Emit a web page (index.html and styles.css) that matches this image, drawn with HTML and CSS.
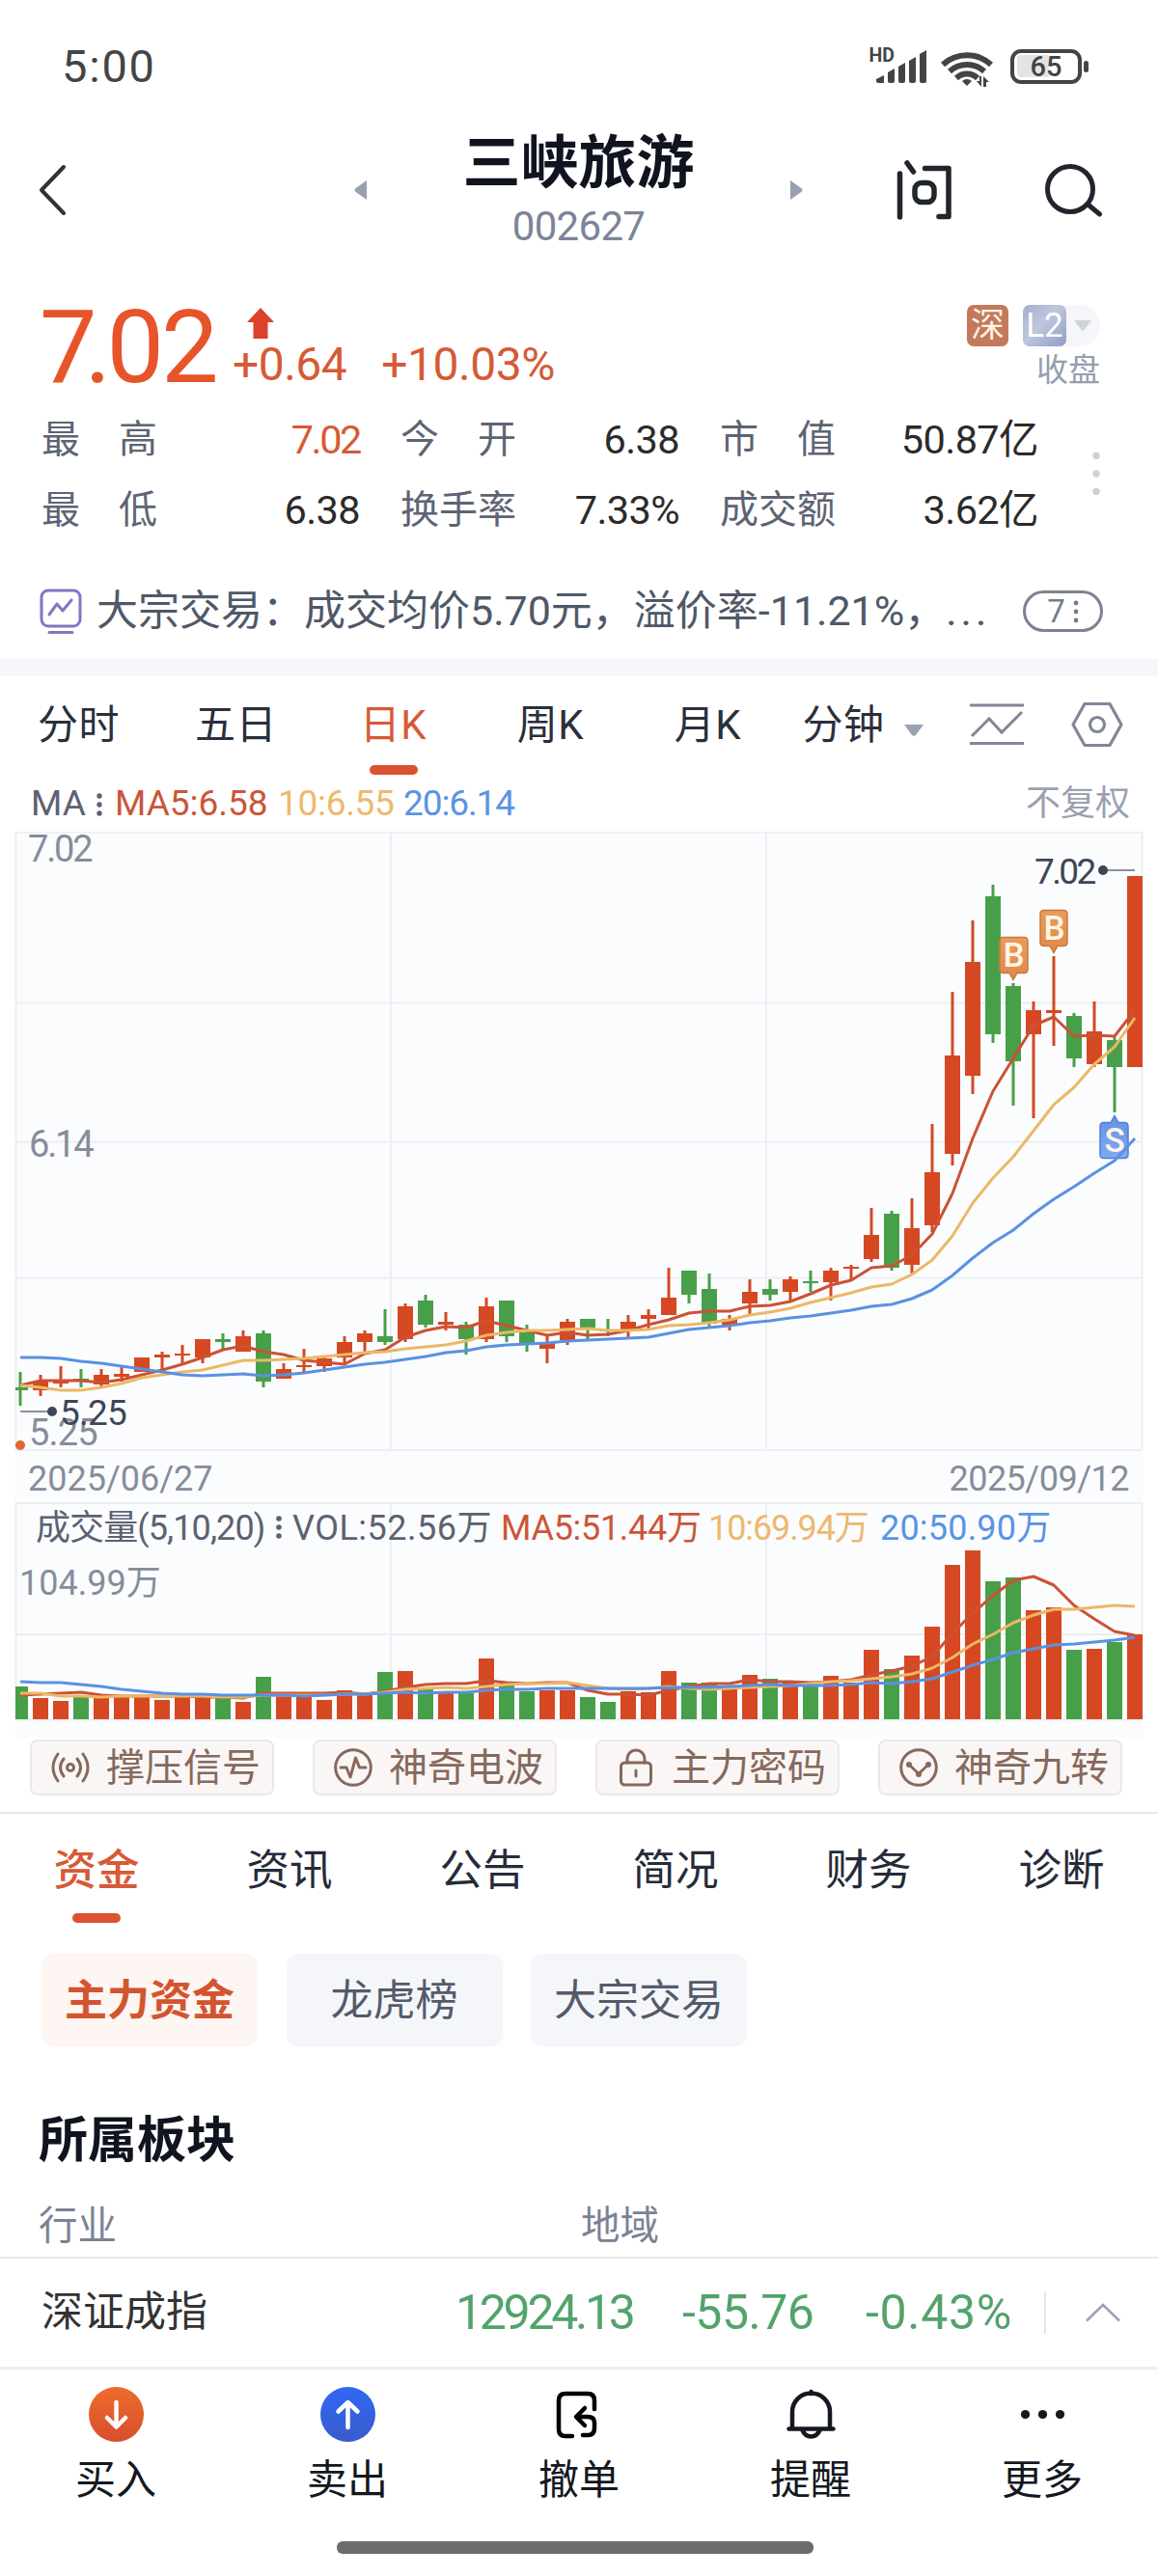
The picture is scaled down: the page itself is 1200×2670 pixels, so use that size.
FILE: index.html
```html
<!DOCTYPE html>
<html lang="zh-CN">
<head>
  <meta charset="UTF-8">
  <meta name="viewport" content="width=device-width, initial-scale=1.0">
  <title>三峡旅游 002627</title>
  <link rel="stylesheet" href="styles.css">
</head>
<body>
  <div class="status-bar">
    <span class="clock">5:00</span>
    <svg class="status-icons" width="230" height="46" viewBox="0 0 230 46">
      <text class="hd" x="0.5" y="18">HD</text>
      <g fill="#444">
        <path d="M8 36l8-4v8H10q-2 0-2-2z"/>
        <path d="M20 29l7-4v13q0 2-2 2h-3q-2 0-2-2z"/>
        <path d="M31 23l7-4v19q0 2-2 2h-3q-2 0-2-2z"/>
        <path d="M42 17l7-4v25q0 2-2 2h-3q-2 0-2-2z"/>
        <path d="M53 10l7-4v32q0 2-2 2h-3q-2 0-2-2z"/>
        <path d="M97 38q5-4 10 0l-5 5z"/>
        <path d="M117 33v11l-5-6h3v-5zM119 44v-11l6 6h-3v5z"/>
      </g>
      <g fill="none" stroke="#444" stroke-width="6">
        <path d="M77 21a37 37 0 0 1 50 0"/>
        <path d="M84 28a27 27 0 0 1 36 0"/>
        <path d="M91 35a16 16 0 0 1 22 0"/>
      </g>
      <path d="M155 11h32v23h-28q-5 0-5-5v-17z" fill="#e4e4e4"/>
      <rect x="149" y="7" width="70" height="32" rx="9" fill="none" stroke="#444" stroke-width="4"/>
      <rect x="223" y="17" width="5" height="12" rx="2.500" fill="#444"/>
      <text class="level" x="184" y="33">65</text>
    </svg>
  </div>

  <header class="header">
    <svg class="back" width="30" height="54" viewBox="0 0 30 54"><path d="M27 3L4 27l23 24" fill="none" stroke="#333" stroke-width="4" stroke-linecap="round" stroke-linejoin="round"/></svg>
    <svg class="prev" width="13" height="20" viewBox="0 0 13 20"><path d="M13 0v20L1 11.500q-1-1.500 0-3z" fill="#98a1b2"/></svg>
    <div class="title">
      <h1>三峡旅游</h1>
      <div class="code">002627</div>
    </div>
    <svg class="next" width="13" height="20" viewBox="0 0 13 20"><path d="M0 0v20l12-8.500q1-1.500 0-3z" fill="#98a1b2"/></svg>
    <svg class="ask" width="58" height="62" viewBox="0 0 58 62" fill="none" stroke="#20262c" stroke-width="5.500" stroke-linecap="round" stroke-linejoin="round">
      <path d="M3.500 14v45M11 3l6.500 9M29.500 8.500H54V58.500H44"/>
      <rect x="19" y="23.500" width="20" height="20" rx="7"/>
    </svg>
    <svg class="search" width="62" height="58" viewBox="0 0 62 58" fill="none" stroke="#20262c" stroke-width="5" stroke-linecap="round">
      <circle cx="28" cy="28" r="23.500"/><path d="M46.500 44l12 10"/>
    </svg>
  </header>

  <section class="quote">
    <div class="quote-top">
      <div class="price"><span class="tight">7</span><span class="dot">.</span>02</div>
      <div class="change">
        <svg width="30" height="34" viewBox="0 0 30 34"><path d="M15 1L29 16H22.500V33H7.500V16H1z" fill="#dc412c"/></svg>
        <div class="delta"><span>+0.64</span><span>+10.03%</span></div>
      </div>
      <div class="market">
        <div class="badges">
          <span class="badge sz">深</span>
          <span class="level2"><span class="badge l2">L2</span><svg width="18" height="11" viewBox="0 0 18 11"><path d="M0 0h18l-7.500 10q-1.500 1-3 0z" fill="#d0d4d6"/></svg></span>
        </div>
        <div class="closed">收盘</div>
      </div>
    </div>
    <div class="stats">
      <span class="label">最　高</span><span class="value red">7.02</span>
      <span class="label">今　开</span><span class="value">6.38</span>
      <span class="label">市　值</span><span class="value">50.87亿</span>
      <span class="label">最　低</span><span class="value">6.38</span>
      <span class="label">换手率</span><span class="value">7.33%</span>
      <span class="label">成交额</span><span class="value">3.62亿</span>
      <svg class="more-dots" width="8" height="46" viewBox="0 0 8 46" fill="#cdd1d6"><circle cx="4" cy="4.500" r="3.700"/><circle cx="4" cy="23" r="3.700"/><circle cx="4" cy="41.500" r="3.700"/></svg>
    </div>
    <div class="news">
      <svg width="44" height="48" viewBox="0 0 44 48" fill="none" stroke="#8178bf" stroke-width="3" stroke-linecap="round" stroke-linejoin="round"><rect x="2" y="2" width="40" height="37" rx="7"/><path d="M10 27l8-11 6 7 9-11M10 45.500h24"/></svg>
      <span class="news-text">大宗交易：成交均价5.70元，溢价率-11.21%，<span class="ellipsis">...</span></span>
      <span class="news-count">7<svg width="6" height="24" viewBox="0 0 6 24" fill="#747b88"><circle cx="3" cy="3" r="2.400"/><circle cx="3" cy="12" r="2.400"/><circle cx="3" cy="21" r="2.400"/></svg></span>
    </div>
  </section>

  <nav class="period-tabs">
    <span>分时</span>
    <span>五日</span>
    <span class="active">日K</span>
    <span>周K</span>
    <span>月K</span>
    <span class="minute">分钟</span>
    <svg class="caret" width="20" height="12" viewBox="0 0 20 12"><path d="M0 0h20l-8 11q-2 1.500-4 0z" fill="#9aa2b1"/></svg>
    <svg class="overlay" width="56" height="44" viewBox="0 0 56 44" fill="none" stroke="#818797" stroke-width="3"><path d="M0 2h56M0 41.500h56M2 34L20 16l13 14L54 9"/></svg>
    <svg class="setting" width="54" height="48" viewBox="0 0 54 48" fill="none" stroke="#818797" stroke-width="3.200" stroke-linejoin="round"><path d="M14 2.500H40L52 24 40 45.500H14L2 24z"/><circle cx="27" cy="24" r="7.500"/></svg>
  </nav>

  <div class="ma-row">
    <span class="ma-name">MA</span>
    <svg width="6" height="24" viewBox="0 0 6 24" fill="#5b6272"><circle cx="3" cy="3" r="2.700"/><circle cx="3" cy="12" r="2.700"/><circle cx="3" cy="21" r="2.700"/></svg>
    <span class="ma5">MA5:6.58</span>
    <span class="ma10">10:6.55</span>
    <span class="ma20">20:6.14</span>
    <span class="adjust">不复权</span>
  </div>

  <svg id="chart" class="chart" width="1200" height="940" viewBox="0 862 1200 940">
    <defs>
      <linearGradient id="buy" x1="0" y1="0" x2="0" y2="1"><stop offset="0" stop-color="#e99c58"/><stop offset="1" stop-color="#de884a"/></linearGradient>
      <linearGradient id="sell" x1="0" y1="0" x2="0" y2="1"><stop offset="0" stop-color="#6590e6"/><stop offset="1" stop-color="#80aaf3"/></linearGradient>
    </defs>
    <rect x="16" y="862" width="1168" height="940" fill="#fbfcfe"/>
    <path class="grid" d="M16 862.500H1184M16 1039.500H1184M16 1183.500H1184M16 1324.500H1184M16 1503H1184M16 1558H1184M16 1694H1184M16 1782.500H1184M405 862V1503M794 862V1503M405 1558V1782M794 1558V1782M16.500 862V1503M1183.500 862V1503M16.500 1558V1782M1183.500 1558V1782"/>
    <g id="candles"></g>
    <g id="volumes"></g>
    <g class="axis">
      <text x="29" y="893">7.02</text>
      <text x="30" y="1199">6.14</text>
      <text class="low" x="30" y="1498">5.25</text>
      <text class="date" x="29" y="1545">2025/06/27</text>
      <text class="date date-end" x="1170" y="1545">2025/09/12</text>
      <text class="date" x="20" y="1653">104.99万</text>
    </g>
    <circle cx="21" cy="1498" r="5" fill="#e0662f"/>
    <path d="M21 1463H54M1143 902H1176" stroke="#8b909b" stroke-width="2"/>
    <circle cx="54" cy="1463" r="5" fill="#3e4656"/>
    <circle cx="1143" cy="902" r="5" fill="#3e4656"/>
    <text class="extreme" x="62" y="1477">5.25</text>
    <text class="extreme top" x="1072" y="916">7.02</text>
    <g class="mark" stroke="#c9783d">
      <path d="M1040 971.500h21q4 0 4 4v29q0 4-4 4h-7l-4 7-4-7h-6q-4 0-4-4v-29q0-4 4-4z" fill="url(#buy)"/>
      <text x="1050.500" y="1002">B</text>
      <path d="M1082 943.500h20q4 0 4 4v29q0 4-4 4h-6l-4 7-4-7h-6q-4 0-4-4v-29q0-4 4-4z" fill="url(#buy)"/>
      <text x="1092.500" y="974">B</text>
    </g>
    <g class="mark" stroke="#4f7ed8">
      <path d="M1144 1200.500h21q4 0 4-4v-29q0-4-4-4h-6l-4-7-4 7h-7q-4 0-4 4v29q0 4 4 4z" fill="url(#sell)"/>
      <text x="1155" y="1194">S</text>
    </g>
    <g id="lines"></g>
    <g class="vol-legend">
      <text class="vol-name" x="37" y="1596">成交量(5,10,20)</text>
      <g fill="#5b6272"><circle cx="289" cy="1574" r="2.800"/><circle cx="289" cy="1583" r="2.800"/><circle cx="289" cy="1592" r="2.800"/></g>
      <text class="vol-now" x="303" y="1596">VOL:52.56万</text>
      <text class="vol-5" x="519" y="1596">MA5:51.44万</text>
      <text class="vol-10" x="734" y="1596">10:69.94万</text>
      <text class="vol-20" x="912" y="1596">20:50.90万</text>
    </g>
  </svg>

  <div class="signals">
    <span class="signal">
      <svg width="40" height="34" viewBox="0 0 40 34"><circle cx="20" cy="17" r="3.500"/><path d="M13 8q-7 9 0 18M27 8q7 9 0 18M7 3q-10 14 0 28M33 3q10 14 0 28"/></svg>
      撑压信号
    </span>
    <span class="signal">
      <svg width="40" height="40" viewBox="0 0 40 40"><circle cx="20" cy="20" r="18.300"/><path d="M7 20h6l4 10 5.500-20 4 10H33"/></svg>
      神奇电波
    </span>
    <span class="signal">
      <svg width="40" height="40" viewBox="0 0 40 40"><rect x="4.500" y="15" width="31" height="23" rx="4"/><path d="M11 15v-4a9 9 0 0 1 18 0v4M20 23v6"/></svg>
      主力密码
    </span>
    <span class="signal">
      <svg width="40" height="40" viewBox="0 0 40 40"><circle cx="20" cy="20" r="18.300"/><path d="M10 17l10 9.500L30 17"/><g fill="#86695d" stroke="none"><circle cx="10" cy="17" r="3"/><circle cx="20" cy="27" r="3"/><circle cx="30" cy="17" r="3"/></g></svg>
      神奇九转
    </span>
  </div>

  <nav class="info-tabs">
    <span class="active">资金</span>
    <span>资讯</span>
    <span>公告</span>
    <span>简况</span>
    <span>财务</span>
    <span>诊断</span>
  </nav>

  <div class="sub-tabs">
    <span class="selected">主力资金</span>
    <span>龙虎榜</span>
    <span>大宗交易</span>
  </div>

  <section class="sector">
    <h2>所属板块</h2>
    <div class="sector-row"><span>行业</span><span>地域</span></div>
  </section>

  <div class="index-row">
    <span class="index-name">深证成指</span>
    <span class="index-value">12924.13</span>
    <span class="index-diff">-55.76</span>
    <span class="index-pct">-0.43%</span>
    <span class="index-line"></span>
    <svg width="36" height="20" viewBox="0 0 36 20" fill="none" stroke="#9aa2b1" stroke-width="2.500"><path d="M1 18.500L18 2l17 16.500"/></svg>
  </div>

  <nav class="bottom-nav">
    <span>
      <svg width="57" height="57" viewBox="0 0 57 57"><defs><linearGradient id="in" x1="0" y1="0" x2="0" y2="1"><stop offset="0" stop-color="#ec6c2b"/><stop offset="1" stop-color="#d94e2e"/></linearGradient></defs><circle cx="28.500" cy="28.500" r="28.500" fill="url(#in)"/><path d="M28.500 16v25M19 32l9.500 9.500L38 32" fill="none" stroke="#fff" stroke-width="4.500" stroke-linecap="round" stroke-linejoin="round"/></svg>
      买入
    </span>
    <span>
      <svg width="57" height="57" viewBox="0 0 57 57"><defs><linearGradient id="out" x1="0" y1="0" x2="0" y2="1"><stop offset="0" stop-color="#3068f4"/><stop offset="1" stop-color="#3a5bcb"/></linearGradient></defs><circle cx="28.500" cy="28.500" r="28.500" fill="url(#out)"/><path d="M28.500 42V17M18.500 25.500l10-9.500 10 9.500" fill="none" stroke="#fff" stroke-width="4.500" stroke-linecap="round" stroke-linejoin="round"/></svg>
      卖出
    </span>
    <span>
      <svg width="57" height="57" viewBox="0 0 57 57" fill="none" stroke="#000" stroke-width="4.500" stroke-linecap="round" stroke-linejoin="round"><path d="M21 51H14q-7 0-7-7V14q0-7 7-7H37q7 0 7 7v9M32 50h5q7 0 7-7V37q0-6-7-6H27M34 22l-9 9 9 9"/></svg>
      撤单
    </span>
    <span>
      <svg width="57" height="57" viewBox="0 0 57 57" fill="none" stroke="#14181f" stroke-width="4.500" stroke-linecap="round" stroke-linejoin="round"><path d="M5.500 43.500h46M9 43V26a19.500 19.500 0 0 1 39 0V43M28.500 5v2M19.500 45q3 6.500 9 6.500t9-6.500"/></svg>
      提醒
    </span>
    <span>
      <svg width="57" height="57" viewBox="0 0 57 57" fill="#14181f"><circle cx="10.500" cy="28.500" r="4.600"/><circle cx="28.500" cy="28.500" r="4.600"/><circle cx="46.500" cy="28.500" r="4.600"/></svg>
      更多
    </span>
  </nav>
  <div class="home-bar"></div>

  <script src="chart.js"></script>
</body>
</html>
```
FILE: styles.css
```css
* {
  box-sizing: border-box;
  margin: 0;
  padding: 0;
}

body {
  width: 1200px;
  height: 2670px;
  background: #fff;
  color: #2a2f3c;
  font-family: Roboto, "Noto Sans CJK SC", sans-serif;
  line-height: 1.2;
  overflow: hidden;
}

svg {
  display: block;
  flex: none;
}

span {
  white-space: nowrap;
}

.status-bar {
  display: flex;
  align-items: center;
  justify-content: space-between;
  height: 138px;
  padding: 0 70px 0 64px;
}

.clock {
  font-size: 47px;
  letter-spacing: 1.8px;
  color: #444;
}

.hd {
  font-size: 19.5px;
  font-weight: 700;
  fill: #444;
}

.level {
  font-size: 29px;
  font-weight: 500;
  text-anchor: middle;
  fill: #444;
}

/* header */
.header {
  display: flex;
  align-items: center;
  height: 118px;
  padding-left: 39px;
}

.prev {
  margin-left: 298px;
}

.title {
  width: 439px;
  padding-top: 5px;
  text-align: center;
}

h1 {
  font-size: 60px;
  font-weight: 700;
  line-height: 60px;
  color: #10141f;
}

.code {
  margin-top: 10px;
  font-size: 42px;
  line-height: 50px;
  letter-spacing: -0.7px;
  color: #7c8498;
}

.ask {
  margin-left: 97px;
}

.search {
  margin-left: 94px;
}

/* quote */
.quote-top {
  display: flex;
  height: 162px;
  padding: 46px 60px 0 41px;
}

.price {
  width: 200px;
  padding-top: 3px;
  font-size: 106px;
  line-height: 110px;
  letter-spacing: -3px;
  color: #e8542a;
}

.price .tight {
  letter-spacing: -13px;
}

.price .dot {
  letter-spacing: -5px;
}

.change {
  padding-top: 16px;
}

.change svg {
  margin-left: 14px;
}

.delta {
  display: flex;
  gap: 36px;
  margin-top: -4px;
  font-size: 48px;
  line-height: 60px;
  letter-spacing: -0.5px;
  color: #d65a35;
}

.market {
  margin-left: auto;
  padding-top: 14px;
}

.badges {
  display: flex;
  gap: 15px;
}

.badge {
  display: block;
  width: 43px;
  height: 43px;
  border-radius: 7px;
  font-size: 35px;
  line-height: 44px;
  text-align: center;
  color: #fff3e4;
}

.sz {
  background: #c37a5b;
}

.level2 {
  display: flex;
  align-items: center;
  gap: 8px;
  width: 80px;
  border-radius: 7px 22px 22px 7px;
  background: #f5f6f9;
}

.l2 {
  width: 45px;
  background: linear-gradient(135deg, #a6aed0, #bfc7dd 45%, #8f9bc6);
  color: #fff;
}

.closed {
  font-size: 33px;
  line-height: 49px;
  text-align: right;
  color: #959eae;
}

.stats {
  display: grid;
  grid-template-columns: 122px 208px 160px 171px 160px 212px 1fr;
  grid-auto-rows: 73px;
  padding-left: 43px;
  font-size: 40px;
  line-height: 76px;
}

.stats .label:nth-child(6n+3),
.stats .label:nth-child(6n+5) {
  padding-left: 42px;
}

.label {
  color: #5d6473;
}

.value {
  font-size: 41.5px;
  letter-spacing: -0.6px;
  text-align: right;
  color: #2b2b2b;
}

.stats .red {
  letter-spacing: -2.4px;
  color: #d65a35;
}

.more-dots {
  grid-column: 7;
  grid-row: 1 / 3;
  align-self: center;
  margin-left: 56px;
}

.news {
  display: flex;
  align-items: center;
  height: 119px;
  padding: 20px 57px 0 41px;
  color: #4f5868;
}

.news-text {
  flex: 1;
  margin-left: 15px;
  padding-top: 1px;
  font-size: 43px;
}

.ellipsis {
  letter-spacing: 4px;
}

.news-count {
  display: flex;
  align-items: center;
  justify-content: center;
  gap: 8px;
  width: 83px;
  height: 43px;
  border: 3px solid #7b8291;
  border-radius: 22px;
  font-size: 33px;
  color: #747b88;
}

/* period tabs */
.period-tabs {
  display: flex;
  align-items: center;
  height: 122px;
  padding-bottom: 3px;
  border-top: 17px solid #f5f6fa;
  font-size: 42px;
}

.period-tabs span {
  position: relative;
  width: 163px;
  padding-top: 2px;
  text-align: center;
  letter-spacing: 0.5px;
}

.period-tabs .active {
  color: #d65a35;
}

.active::after {
  content: "";
  position: absolute;
  left: 50%;
  width: 50px;
  height: 10px;
  margin-left: -25px;
  border-radius: 5px;
  background: #dc5230;
}

.period-tabs .active::after {
  top: 68px;
}

.period-tabs .minute {
  width: 118px;
}

.caret {
  margin: 12px 0 0 4px;
}

.overlay {
  margin-left: 48px;
}

.setting {
  margin-left: 49px;
}

.ma-row {
  display: flex;
  align-items: center;
  height: 57px;
  padding: 0 29px 0 32px;
  font-size: 37px;
}

.ma-name {
  width: 68px;
  color: #5b6272;
}

.ma5 {
  margin-left: 13px;
  width: 169px;
  color: #cb5538;
}

.ma10 {
  width: 130px;
  letter-spacing: -0.3px;
  color: #ecb96d;
}

.ma20 {
  letter-spacing: -1.1px;
  color: #5a94e4;
}

.adjust {
  margin-left: auto;
  padding-top: 1px;
  font-size: 36px;
  color: #9aa1b0;
}

/* chart */
.grid {
  fill: none;
  stroke: #eceef1;
  stroke-width: 2;
}

.axis {
  font-size: 38px;
  letter-spacing: -2.2px;
  fill: #868d9b;
}

.axis .low {
  letter-spacing: -0.8px;
}

.axis .date {
  font-size: 36px;
  letter-spacing: 0;
}

.axis .date-end {
  letter-spacing: -0.5px;
  text-anchor: end;
}

.extreme {
  font-size: 37px;
  letter-spacing: -0.8px;
  fill: #3e4656;
}

.extreme.top {
  letter-spacing: -2.6px;
}

.mark {
  stroke-width: 1.5;
}

.mark text {
  font-size: 35px;
  font-weight: 500;
  text-anchor: middle;
  stroke: none;
  fill: #fff6e6;
}

.vol-legend {
  font-size: 36px;
}

.vol-name {
  letter-spacing: -0.9px;
  fill: #5b6272;
}

.vol-now {
  letter-spacing: 0.5px;
  fill: #5b6272;
}

.vol-5 {
  letter-spacing: -0.3px;
  fill: #cb5538;
}

.vol-10 {
  letter-spacing: -1.1px;
  fill: #ecb96d;
}

.vol-20 {
  letter-spacing: 0.2px;
  fill: #5a94e4;
}

.up {
  fill: #d64822;
}

.down {
  fill: #489f49;
}

.line {
  fill: none;
  stroke-width: 3;
  stroke-linejoin: round;
}

.line-5 {
  stroke: #cb5235;
}

.line-10 {
  stroke: #ebb867;
}

.line-20 {
  stroke: #5a91e2;
}

/* signals */
.signals {
  display: grid;
  grid-template-columns: repeat(4, 253px);
  column-gap: 40px;
  height: 78px;
  padding: 1px 0 0 31px;
  border-bottom: 2px solid #e6e7e9;
}

.signal {
  display: flex;
  align-items: center;
  gap: 17px;
  height: 58px;
  padding-left: 20px;
  border: 2px solid #ece8e7;
  border-radius: 8px;
  background: #faf6f5;
  font-size: 40px;
  line-height: 57px;
  color: #86695d;
}

.signal svg {
  fill: none;
  stroke: #86695d;
  stroke-width: 3;
  stroke-linecap: round;
  stroke-linejoin: round;
}

/* info tabs */
.info-tabs {
  display: grid;
  grid-template-columns: repeat(6, 200px);
  height: 145px;
  font-size: 44.5px;
  line-height: 119px;
  text-align: center;
  color: #262b3a;
}

.info-tabs span {
  position: relative;
}

.info-tabs .active {
  font-weight: 500;
  color: #d65a35;
}

.info-tabs .active::after {
  top: 103px;
}

.sub-tabs {
  display: flex;
  gap: 29.5px;
  padding-left: 43px;
  font-size: 44px;
  line-height: 99px;
}

.sub-tabs span {
  width: 224px;
  height: 96px;
  border-radius: 12px;
  background: #f5f6fa;
  text-align: center;
  color: #535b6b;
}

.sub-tabs .selected {
  background: #fef6f3;
  font-weight: 700;
  color: #d2552f;
}

.sector {
  height: 218px;
  padding: 68px 0 0 40px;
}

h2 {
  font-size: 51px;
  font-weight: 700;
  line-height: 60px;
  color: #10141f;
}

.sector-row {
  display: grid;
  grid-template-columns: 562px 1fr;
  margin-top: 33px;
  font-size: 40.5px;
  line-height: 50px;
  color: #7b8296;
}

.index-row {
  display: flex;
  align-items: center;
  height: 114px;
  padding-left: 43px;
  border-top: 2px solid #e6e7e9;
  font-size: 50px;
  color: #52a36c;
}

.index-name {
  width: 429px;
  font-size: 43px;
  color: #333;
}

.index-value {
  width: 235px;
  letter-spacing: -3.3px;
}

.index-diff {
  width: 190px;
  letter-spacing: -0.5px;
}

.index-pct {
  width: 185px;
  letter-spacing: 0.7px;
}

.index-line {
  width: 2px;
  height: 44px;
  margin-right: 41px;
  background: #e2e4e8;
}

/* bottom nav */
.bottom-nav {
  display: grid;
  grid-template-columns: repeat(5, 240px);
  height: 181px;
  border-top: 3px solid #efefef;
}

.bottom-nav span {
  display: flex;
  flex-direction: column;
  align-items: center;
  gap: 15px;
  padding-top: 18px;
  font-size: 42px;
  line-height: 50px;
  color: #14181f;
}

.home-bar {
  width: 494px;
  height: 13px;
  margin-left: 349px;
  border-radius: 6px;
  background: #6b6b6b;
}
```
FILE: chart.js
```js
const NS = 'http://www.w3.org/2000/svg';
const STEP = 21;
const START = 21;
const BASE = 1782;

// [direction, high, body top, body bottom, low, volume top]
const bars = [
  ['d', 1422, 1438, 1441, 1457, 1748], ['u', 1425, 1432, 1441, 1447, 1760], ['u', 1416, 1431, 1434, 1438, 1763],
  ['d', 1419, 1429, 1432, 1438, 1757], ['u', 1419, 1425, 1435, 1437, 1758], ['u', 1417, 1424, 1427, 1432, 1759],
  ['u', 1407, 1407, 1422, 1422, 1758], ['u', 1401, 1404, 1407, 1421, 1762], ['u', 1394, 1403, 1405, 1415, 1758],
  ['u', 1388, 1388, 1407, 1413, 1758], ['d', 1382, 1388, 1391, 1399, 1760], ['u', 1379, 1385, 1401, 1401, 1764],
  ['d', 1379, 1382, 1432, 1438, 1738], ['u', 1413, 1419, 1429, 1429, 1758], ['u', 1398, 1415, 1417, 1422, 1758],
  ['u', 1407, 1408, 1416, 1422, 1762], ['u', 1385, 1391, 1407, 1415, 1752], ['u', 1379, 1382, 1391, 1401, 1757],
  ['d', 1357, 1385, 1391, 1394, 1733], ['u', 1351, 1354, 1388, 1391, 1732], ['d', 1342, 1348, 1373, 1376, 1751],
  ['u', 1360, 1370, 1373, 1379, 1755], ['d', 1370, 1373, 1388, 1404, 1754], ['u', 1345, 1354, 1388, 1391, 1719],
  ['d', 1348, 1348, 1385, 1391, 1747], ['d', 1373, 1381, 1392, 1401, 1753], ['u', 1384, 1392, 1398, 1413, 1752],
  ['u', 1367, 1370, 1389, 1394, 1752], ['d', 1367, 1367, 1376, 1388, 1759], ['d', 1367, 1378, 1380, 1385, 1764],
  ['u', 1363, 1370, 1378, 1386, 1753], ['u', 1357, 1363, 1367, 1377, 1754], ['u', 1314, 1345, 1363, 1363, 1732],
  ['d', 1317, 1317, 1342, 1351, 1744], ['d', 1320, 1336, 1372, 1375, 1744], ['u', 1363, 1367, 1373, 1379, 1748],
  ['u', 1326, 1339, 1351, 1362, 1736], ['d', 1326, 1336, 1342, 1348, 1740], ['u', 1323, 1326, 1339, 1350, 1744],
  ['d', 1317, 1328, 1330, 1339, 1746], ['u', 1314, 1317, 1329, 1348, 1737], ['u', 1311, 1313, 1315, 1328, 1744],
  ['u', 1252, 1280, 1305, 1308, 1710], ['d', 1255, 1258, 1314, 1317, 1730], ['u', 1242, 1273, 1311, 1320, 1716],
  ['u', 1165, 1215, 1270, 1277, 1686], ['u', 1028, 1094, 1196, 1208, 1622], ['u', 954, 997, 1115, 1134, 1607],
  ['d', 917, 929, 1072, 1081, 1639], ['d', 1019, 1022, 1100, 1146, 1635], ['u', 1038, 1047, 1072, 1159, 1669],
  ['u', 991, 1047, 1050, 1084, 1666], ['d', 1050, 1053, 1097, 1106, 1710], ['u', 1038, 1069, 1103, 1106, 1709],
  ['d', 1075, 1078, 1106, 1153, 1702], ['u', 908, 908, 1106, 1106, 1694]
];

const lines = [
  ['line-5', [1436, 1431, 1431, 1431, 1433, 1430, 1425, 1420, 1414, 1407, 1399, 1395, 1401, 1404, 1410, 1412, 1414, 1403, 1399, 1386, 1379, 1375, 1376, 1369, 1374, 1379, 1384, 1381, 1384, 1383, 1379, 1373, 1368, 1361, 1359, 1359, 1354, 1353, 1349, 1341, 1332, 1327, 1314, 1312, 1301, 1279, 1237, 1180, 1131, 1097, 1063, 1054, 1074, 1073, 1074, 1047]],
  ['line-10', [1436, 1438, 1441, 1441, 1438, 1434, 1428, 1425, 1422, 1420, 1415, 1410, 1410, 1409, 1408, 1406, 1404, 1402, 1401, 1398, 1396, 1394, 1390, 1384, 1381, 1379, 1379, 1378, 1377, 1379, 1379, 1378, 1374, 1373, 1371, 1368, 1363, 1360, 1356, 1350, 1345, 1340, 1334, 1331, 1321, 1306, 1281, 1247, 1221, 1199, 1172, 1145, 1127, 1103, 1085, 1055]],
  ['line-20', [1407, 1407, 1408, 1411, 1413, 1416, 1419, 1422, 1425, 1426, 1425, 1424, 1426, 1425, 1423, 1420, 1417, 1414, 1412, 1409, 1406, 1402, 1400, 1396, 1394, 1393, 1392, 1390, 1389, 1388, 1387, 1386, 1382, 1378, 1376, 1374, 1371, 1369, 1366, 1364, 1361, 1358, 1354, 1352, 1346, 1337, 1322, 1304, 1288, 1275, 1258, 1243, 1230, 1216, 1203, 1180]],
  ['line-5', [1757, 1756, 1755, 1754, 1757, 1758, 1758, 1758, 1758, 1759, 1759, 1760, 1755, 1755, 1755, 1755, 1754, 1756, 1753, 1749, 1746, 1745, 1745, 1742, 1744, 1745, 1744, 1744, 1752, 1756, 1756, 1757, 1752, 1748, 1745, 1745, 1741, 1743, 1743, 1744, 1743, 1741, 1736, 1732, 1727, 1717, 1693, 1672, 1654, 1638, 1634, 1643, 1664, 1678, 1691, 1695]],
  ['line-10', [1755, 1755, 1758, 1758, 1759, 1758, 1758, 1758, 1758, 1758, 1759, 1759, 1757, 1757, 1757, 1757, 1756, 1756, 1754, 1751, 1750, 1749, 1750, 1748, 1746, 1745, 1745, 1744, 1747, 1750, 1751, 1750, 1748, 1750, 1751, 1750, 1749, 1748, 1747, 1745, 1743, 1742, 1740, 1738, 1735, 1729, 1718, 1704, 1694, 1682, 1674, 1668, 1668, 1666, 1664, 1665]],
  ['line-20', [1743, 1744, 1744, 1746, 1748, 1751, 1753, 1755, 1756, 1756, 1757, 1757, 1757, 1757, 1758, 1757, 1756, 1756, 1755, 1754, 1755, 1754, 1754, 1752, 1751, 1751, 1750, 1750, 1750, 1750, 1750, 1750, 1749, 1749, 1749, 1748, 1747, 1746, 1747, 1747, 1747, 1746, 1744, 1745, 1743, 1740, 1733, 1726, 1720, 1713, 1709, 1705, 1704, 1702, 1700, 1697]]
];

function add(parent, tag, attrs) {
  const el = document.createElementNS(NS, tag);
  for (const key in attrs) el.setAttribute(key, attrs[key]);
  document.getElementById(parent).appendChild(el);
}

bars.forEach(([dir, high, top, bottom, low, vol], i) => {
  const x = START + i * STEP;
  const cls = dir === 'u' ? 'up' : 'down';
  // the first bar is cut off by the left edge of the chart
  const left = Math.max(x - 8, 16);
  const width = x + 8 - left;
  add('candles', 'rect', { class: cls, x: x - 1.5, y: high, width: 3, height: low - high });
  add('candles', 'rect', { class: cls, x: left, y: top, width: width, height: bottom - top });
  add('volumes', 'rect', { class: cls, x: left, y: vol, width: width, height: BASE - vol });
});

lines.forEach(([cls, ys]) => {
  const points = ys.map((y, i) => `${START + i * STEP},${y}`).join(' ');
  add('lines', 'polyline', { class: 'line ' + cls, points: points });
});
```
